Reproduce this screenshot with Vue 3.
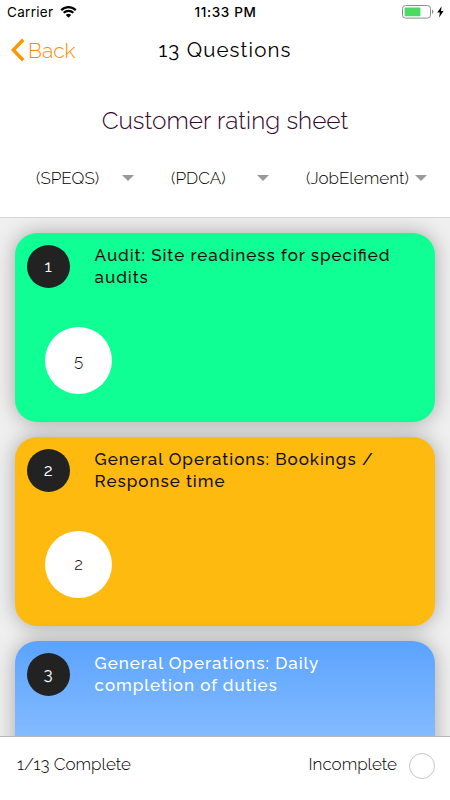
<template>
  <div class="screen">
    <header class="header">
      <div class="status-bar">
        <div class="status-left">
          <span class="carrier">Carrier</span>
          <svg class="wifi" viewBox="0 0 17 12">
            <path d="M1.2 4.1a10.3 10.3 0 0 1 14.6 0M3.7 6.8a6.8 6.8 0 0 1 9.6 0" />
            <path class="dot" d="M5.8 9a3.8 3.8 0 0 1 5.4 0L8.5 11.7z" />
          </svg>
        </div>
        <span class="time">11:33 PM</span>
        <div class="status-right">
          <svg class="battery" viewBox="0 0 32 14">
            <rect class="shell" x="0.5" y="0.5" width="28" height="12.6" rx="3" />
            <rect class="level" x="2.6" y="2.6" width="15.8" height="8.6" rx="0.6" />
            <path class="tip" d="M30 4.6q1.4.6 1.4 2.2t-1.4 2.2z" />
          </svg>
          <svg class="bolt" viewBox="0 0 7 12">
            <path d="M4.6.3.3 6.6h2.6L2.1 11.4 6.6 4.9H4z" />
          </svg>
        </div>
      </div>

      <div class="nav-bar">
        <button class="back">
          <svg class="chevron" viewBox="0 0 14 24">
            <path d="M12.2 1.8 2.3 12l9.9 10.2" />
          </svg>
          <span class="back-label">Back</span>
        </button>
        <span class="nav-title">{{ total }} Questions</span>
      </div>

      <h1 class="title">Customer rating sheet</h1>

      <div class="filters">
        <div v-for="filter in filters" :key="filter" class="filter">
          <span class="filter-label" :class="{ wide: filter.length > 8 }">({{ filter }})</span>
          <svg class="arrow" viewBox="0 0 12 6"><path d="M0 0h12L6 6z" /></svg>
        </div>
      </div>
    </header>

    <main class="list">
      <article
        v-for="question in questions"
        :key="question.id"
        class="card"
        :class="question.color"
      >
        <div class="card-top">
          <span class="number">{{ question.id }}</span>
          <p class="text">{{ question.text }}</p>
        </div>
        <span v-if="question.rating" class="rating">{{ question.rating }}</span>
      </article>
    </main>

    <footer class="footer">
      <span class="progress">{{ completed }}/{{ total }} Complete</span>
      <label class="toggle" @click="incompleteOnly = !incompleteOnly">
        <span class="toggle-label">Incomplete</span>
        <span class="radio" :class="{ checked: incompleteOnly }"></span>
      </label>
    </footer>
  </div>
</template>

<script setup>
import { ref } from 'vue';

const total = 13;
const completed = ref(1);
const incompleteOnly = ref(false);

const filters = ['SPEQS', 'PDCA', 'JobElement'];

const questions = ref([
  { id: 1, text: 'Audit: Site readiness for specified audits', rating: 5, color: 'green' },
  { id: 2, text: 'General Operations: Bookings / Response time', rating: 2, color: 'amber' },
  { id: 3, text: 'General Operations: Daily completion of duties', rating: null, color: 'blue' },
]);
</script>

<style>
body {
  margin: 0;
  background: #fff;
}
</style>

<style scoped>
.screen {
  display: flex;
  flex-direction: column;
  width: 450px;
  height: 800px;
  overflow: hidden;
  font-family: Raleway, Lato, sans-serif;
  color: #000;
  background: #fff;
}

.header {
  flex: none;
  box-sizing: border-box;
  height: 218px;
  border-bottom: 1px solid #d6d6d6;
}

.status-bar {
  display: grid;
  grid-template-columns: 1fr auto 1fr;
  align-items: center;
  height: 24px;
  padding: 0 6px 0 7px;
  font-family: Inter, sans-serif;
}

.status-left,
.status-right {
  display: flex;
  align-items: center;
}

.status-left {
  gap: 7px;
}

.status-right {
  justify-content: flex-end;
  gap: 3px;
}

.carrier {
  font-size: 13.5px;
  letter-spacing: 0.3px;
}

.time {
  font-size: 13.5px;
  font-weight: 500;
  letter-spacing: 0.65px;
}

.wifi {
  width: 17px;
  height: 12px;
  fill: none;
  stroke: #000;
  stroke-width: 2.2;
}

.wifi .dot {
  fill: #000;
  stroke: none;
}

.battery {
  width: 32px;
  height: 14px;
}

.shell {
  fill: #fff;
  stroke: #8c8c8c;
}

.level {
  fill: #4cd964;
}

.tip {
  fill: #8c8c8c;
}

.bolt {
  width: 7px;
  height: 12px;
}

.nav-bar {
  display: grid;
  grid-template-columns: 1fr auto 1fr;
  align-items: center;
  height: 52px;
  padding: 0 11px;
}

.back {
  display: flex;
  align-items: center;
  gap: 3px;
  padding: 0;
  border: 0;
  background: none;
  font: inherit;
  font-size: 21px;
  font-weight: 300;
  color: #ff8c00;
}

.chevron {
  width: 14px;
  height: 24px;
  fill: none;
  stroke: #ff9500;
  stroke-width: 3.4;
}

.nav-title {
  font-size: 20.5px;
  letter-spacing: 1.1px;
}

.title {
  margin: 28px 0 0;
  font-size: 24.4px;
  line-height: 34px;
  font-weight: 300;
  text-align: center;
  color: #32092f;
}

.filters {
  display: grid;
  grid-template-columns: 135px 135px auto;
  padding: 28px 0 0 36px;
}

.filter {
  display: flex;
  align-items: center;
  height: 24px;
  font-size: 17px;
  font-weight: 300;
  letter-spacing: 0.05px;
}

.filter-label {
  width: 86px;
}

.filter-label.wide {
  width: 109px;
}

.arrow {
  width: 12px;
  height: 6px;
  fill: #999;
}

.list {
  flex: 1;
  min-height: 0;
  display: flex;
  flex-direction: column;
  gap: 15px;
  padding: 15px 14.6px 0;
  overflow: hidden;
  background: #efefef;
}

.card {
  flex: none;
  box-sizing: border-box;
  height: 189px;
  padding: 12px;
  border-radius: 22px;
  color: #111;
  box-shadow: 0 0 20px rgba(0, 0, 0, 0.3);
}

.green {
  background: #10ff94;
}

.amber {
  background: #ffba10;
}

.blue {
  color: #fff;
  background: linear-gradient(#5ba3ff, #acd2ff);
}

.card-top {
  display: flex;
  gap: 25px;
}

.number,
.rating {
  display: flex;
  align-items: center;
  justify-content: center;
  box-sizing: border-box;
  padding-bottom: 2px;
  border-radius: 50%;
}

.number {
  flex: none;
  width: 43px;
  height: 43px;
  font-size: 17px;
  color: #fff;
  background: #222;
}

.text {
  width: 310px;
  margin: 0;
  font-size: 17px;
  font-weight: 500;
  line-height: 21.5px;
  letter-spacing: 0.96px;
  font-feature-settings: 'liga' 1;
}

.rating {
  width: 67px;
  height: 67px;
  margin: 39px 0 0 18.4px;
  font-size: 17px;
  font-weight: 300;
  background: #fff;
}

.footer {
  flex: none;
  display: flex;
  align-items: flex-start;
  justify-content: space-between;
  box-sizing: border-box;
  height: 64px;
  padding: 14px 15px 0 17px;
  border-top: 1px solid #b8b8b8;
  font-size: 17px;
  font-weight: 300;
  line-height: 26px;
  background: #fff;
}

.toggle {
  display: flex;
  gap: 12px;
}

.radio {
  box-sizing: border-box;
  width: 26px;
  height: 26px;
  margin-top: 2px;
  border: 1px solid #c7c7cc;
  border-radius: 50%;
}

.radio.checked {
  background: #ff9500;
}
</style>
